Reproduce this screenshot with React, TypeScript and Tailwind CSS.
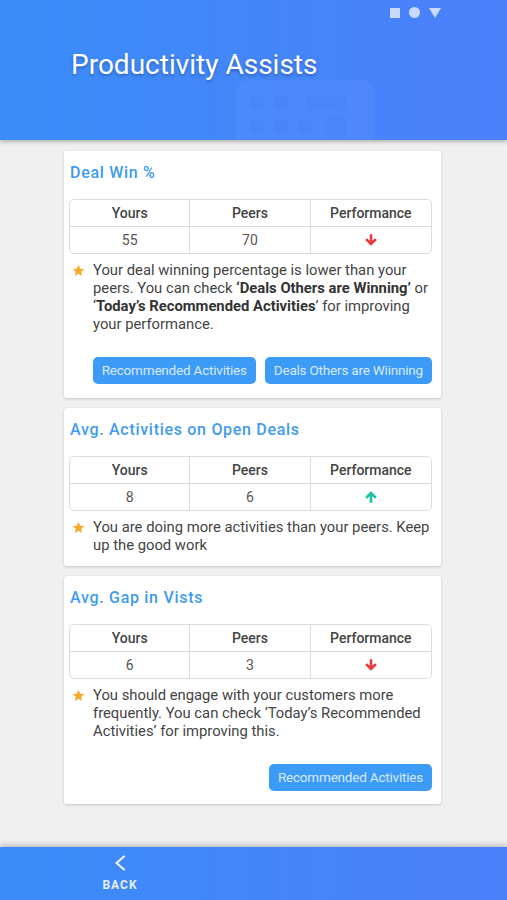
import React from "react";

const Down = () => (
  <svg width="14" height="14" viewBox="0 0 24 24" className="inline-block">
    <path d="M12 22 L2 12 L5.3 8.8 L9.8 13.3 V2 H14.2 V13.3 L18.7 8.8 L22 12 Z" fill="#e93b3b" />
  </svg>
);
const Up = () => (
  <svg width="14" height="14" viewBox="0 0 24 24" className="inline-block">
    <path d="M12 2 L2 12 L5.3 15.2 L9.8 10.7 V22 H14.2 V10.7 L18.7 15.2 L22 12 Z" fill="#1dbfa5" />
  </svg>
);
const Star = () => (
  <svg width="13" height="13" viewBox="0 0 24 24" className="mt-[3px] shrink-0">
    <path d="M12 1.5 L15.1 8.6 L22.8 9.3 L17 14.4 L18.7 22 L12 18 L5.3 22 L7 14.4 L1.2 9.3 L8.9 8.6 Z" fill="#f7a928" />
  </svg>
);

function Table({ yours, peers, up }: { yours: string; peers: string; up: boolean }) {
  return (
    <div className="grid grid-cols-3 rounded-[5px] border border-[#dcdcdc] overflow-hidden text-center">
      <div className="h-[27px] flex items-center justify-center text-[14px] font-medium text-[#444] border-r border-b border-[#dcdcdc]">Yours</div>
      <div className="h-[27px] flex items-center justify-center text-[14px] font-medium text-[#444] border-r border-b border-[#dcdcdc]">Peers</div>
      <div className="h-[27px] flex items-center justify-center text-[14px] font-medium text-[#444] border-b border-[#dcdcdc]">Performance</div>
      <div className="h-[26px] flex items-center justify-center text-[14px] text-[#555] border-r border-[#dcdcdc]">{yours}</div>
      <div className="h-[26px] flex items-center justify-center text-[14px] text-[#555] border-r border-[#dcdcdc]">{peers}</div>
      <div className="h-[26px] flex items-center justify-center">{up ? <Up /> : <Down />}</div>
    </div>
  );
}

function Btn({ children }: { children: React.ReactNode }) {
  return (
    <div className="h-[27px] px-[9px] flex items-center rounded-[5px] bg-[#3b9bf6] text-[13.5px] text-[#d9e9ff] tracking-[-0.2px]">
      {children}
    </div>
  );
}

function Card({ title, children }: { title: string; children: React.ReactNode }) {
  return (
    <div className="ml-[64px] w-[377px] bg-white rounded-[3px] shadow-[0_1px_3px_rgba(0,0,0,0.18)] pl-[5px] pr-[9px]">
      <div className="pt-[13px] pl-[1px] h-[48px] text-[16px] leading-[18px] font-medium tracking-[0.7px] text-[#3f9bf0]">{title}</div>
      {children}
    </div>
  );
}

export default function App() {
  return (
    <div className="w-[507px] h-[900px] flex flex-col bg-[#f0f0f0] overflow-hidden" style={{ fontFamily: "Roboto, 'Noto Sans', sans-serif" }}>
      <div className="relative h-[140px] shrink-0 bg-gradient-to-r from-[#3a8cf9] to-[#4b80fb] shadow-[0_2px_4px_rgba(0,0,0,0.25)] z-10">
        <svg className="absolute left-[236px] top-[80px]" width="138" height="60" viewBox="0 0 138 60">
          <rect x="0" y="0" width="138" height="80" rx="12" fill="#ffffff" fillOpacity="0.04" />
          <rect x="14" y="16" width="14" height="14" fill="#1f5fe0" fillOpacity="0.06" />
          <rect x="38" y="16" width="14" height="14" fill="#1f5fe0" fillOpacity="0.06" />
          <rect x="70" y="16" width="40" height="14" fill="#1f5fe0" fillOpacity="0.06" />
          <rect x="14" y="40" width="14" height="14" fill="#1f5fe0" fillOpacity="0.06" />
          <rect x="38" y="40" width="14" height="14" fill="#1f5fe0" fillOpacity="0.06" />
          <rect x="62" y="40" width="14" height="14" fill="#1f5fe0" fillOpacity="0.06" />
          <rect x="90" y="36" width="20" height="20" fill="#1f5fe0" fillOpacity="0.06" />
        </svg>
        <div className="absolute right-[66px] top-[7px] flex items-center gap-[9px]">
          <div className="w-[10px] h-[10px] bg-[#c9d9ff]" />
          <div className="w-[11px] h-[11px] rounded-full bg-[#c9d9ff]" />
          <svg width="12" height="10" viewBox="0 0 12 10"><path d="M0 0 H12 L6 10 Z" fill="#c9d9ff" /></svg>
        </div>
        <div className="absolute left-[71px] top-[48px] text-[28px] leading-[34px] text-white [text-shadow:0_2px_3px_rgba(0,0,0,0.25)]">
          Productivity Assists
        </div>
      </div>

      <div className="flex-1 pt-[11px] flex flex-col gap-[10px]">
        <Card title="Deal Win %">
          <Table yours="55" peers="70" up={false} />
          <div className="flex gap-[8px] pl-[3px] pt-[7px] text-[14.8px] leading-[18px] text-[#444]">
            <Star />
            <div>
              Your deal winning percentage is lower than your peers. You can check <b className="font-bold text-[#333]">‘Deals Others are Winning’</b> or ‘<b className="font-bold text-[#333]">Today’s Recommended Activities</b>’ for improving your performance.
            </div>
          </div>
          <div className="flex justify-end gap-[9px] pt-[24px] pb-[14px]">
            <Btn>Recommended Activities</Btn>
            <Btn>Deals Others are Wiinning</Btn>
          </div>
        </Card>

        <Card title="Avg. Activities on Open Deals">
          <Table yours="8" peers="6" up={true} />
          <div className="flex gap-[8px] pl-[3px] pt-[7px] pb-[12px] text-[14.8px] leading-[18px] text-[#444]">
            <Star />
            <div>You are doing more activities than your peers. Keep up the good work</div>
          </div>
        </Card>

        <Card title="Avg. Gap in Vists">
          <Table yours="6" peers="3" up={false} />
          <div className="flex gap-[8px] pl-[3px] pt-[7px] text-[14.8px] leading-[18px] text-[#444]">
            <Star />
            <div>You should engage with your customers more frequently. You can check ‘Today’s Recommended Activities’ for improving this.</div>
          </div>
          <div className="flex justify-end gap-[9px] pt-[24px] pb-[13px]">
            <Btn>Recommended Activities</Btn>
          </div>
        </Card>
      </div>

      <div className="h-[53px] shrink-0 bg-gradient-to-r from-[#3a8cf9] to-[#4b80fb] shadow-[0_-2px_5px_rgba(0,0,0,0.22)] flex">
        <div className="ml-[100px] w-[40px] flex flex-col items-center pt-[8px]">
          <svg width="14" height="16" viewBox="0 0 14 16"><path d="M11 1.5 L3.5 8 L11 14.5" stroke="#eef3ff" strokeWidth="2.2" fill="none" strokeLinecap="round" strokeLinejoin="round" /></svg>
          <div className="mt-[7px] text-[12px] leading-[14px] font-bold tracking-[1px] text-[#e6eeff]">BACK</div>
        </div>
      </div>
    </div>
  );
}
